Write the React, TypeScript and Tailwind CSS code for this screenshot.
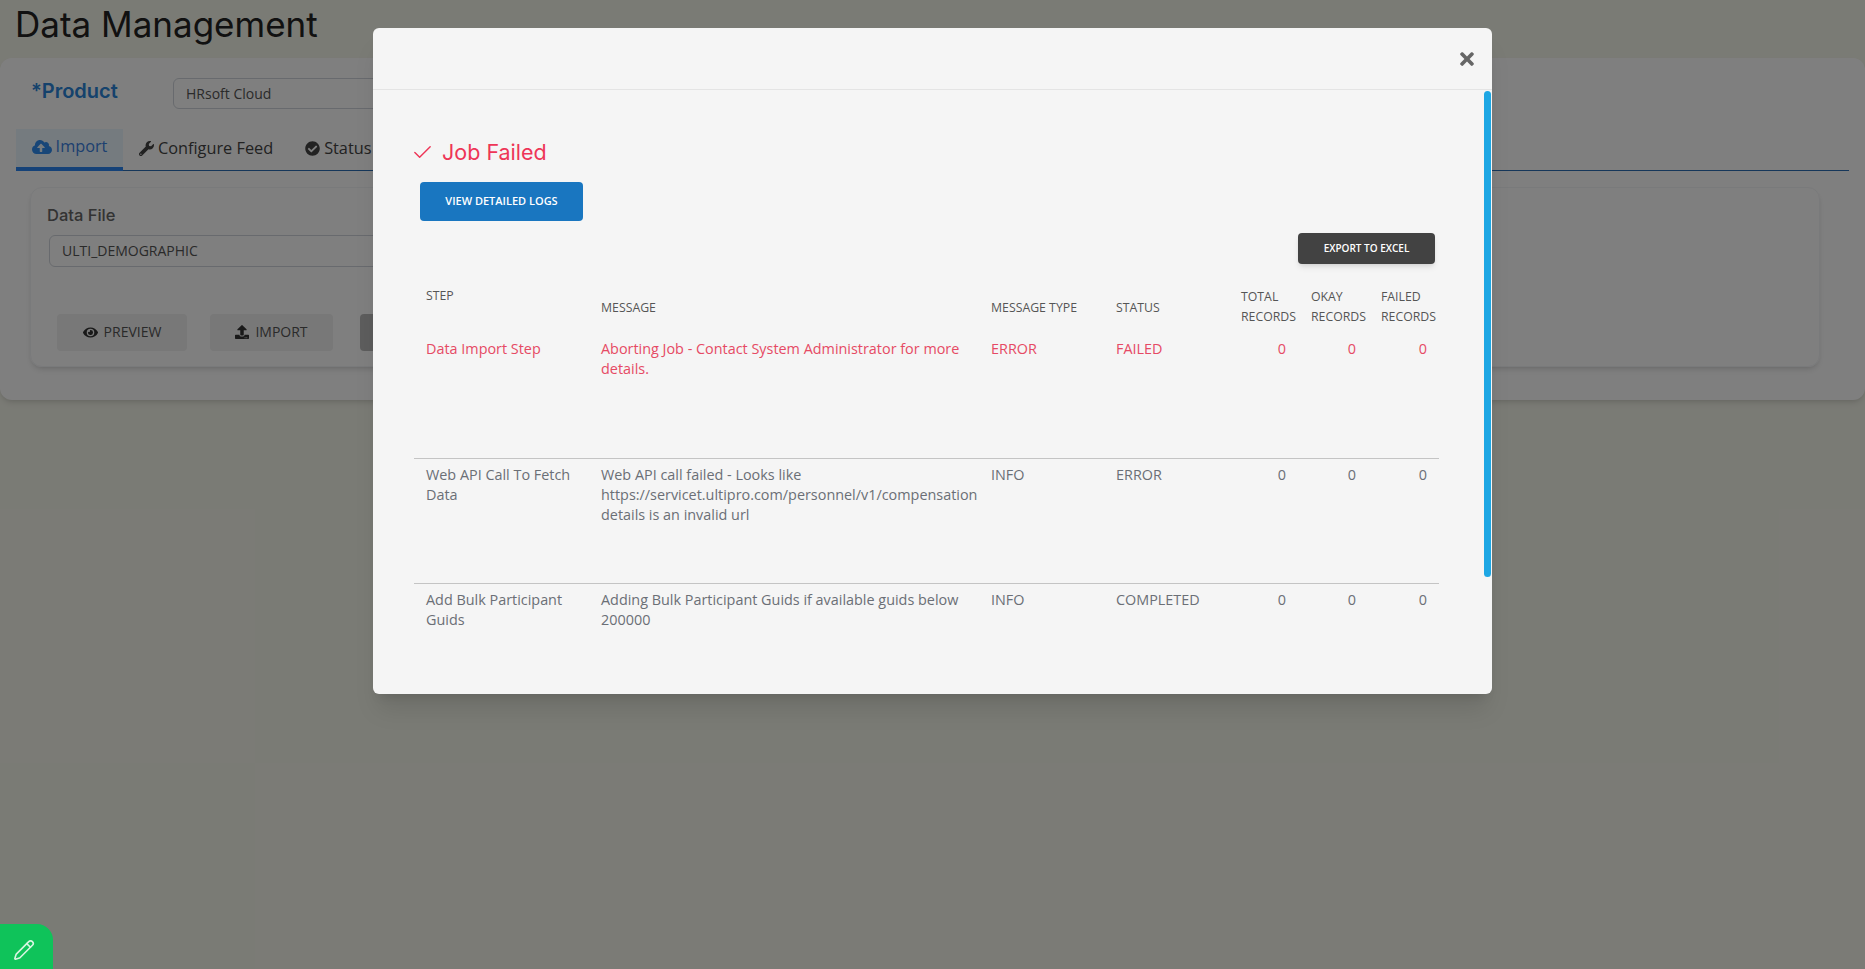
import React from "react";
import { FaCheckCircle, FaCloudUploadAlt, FaEye, FaTimes, FaUpload, FaWrench } from "react-icons/fa";
import { Check, Pencil } from "lucide-react";

const heading = "font-['Inter',sans-serif]";

interface JobRow {
  step: string;
  message: React.ReactNode;
  type: string;
  status: string;
  failed?: boolean;
}

const rows: JobRow[] = [
  {
    step: "Data Import Step",
    message: "Aborting Job - Contact System Administrator for more details.",
    type: "ERROR",
    status: "FAILED",
    failed: true,
  },
  {
    step: "Web API Call To Fetch Data",
    message: (
      <>
        Web API call failed - Looks like
        <br />
        https://servicet.ultipro.com/personnel/v1/compensation
        <br />
        details is an invalid url
      </>
    ),
    type: "INFO",
    status: "ERROR",
  },
  {
    step: "Add Bulk Participant Guids",
    message: "Adding Bulk Participant Guids if available guids below 200000",
    type: "INFO",
    status: "COMPLETED",
  },
];

const PageBehind = () => (
  <div className="h-[969px] bg-[#f5f6eb] font-['Open_Sans',sans-serif]">
    <h1 className={`${heading} pl-[15px] pt-[4px] h-[58px] text-[35px] leading-[40px] text-[#222]`}>Data Management</h1>
    <div className="h-[342px] bg-white rounded-xl shadow-md pt-[17px]">
      <div className="flex items-center h-[32px]">
        <span className={`${heading} ml-[31px] w-[142px] text-[20px] font-semibold text-[#2a84d8]`}>*Product</span>
        <div className="w-[500px] h-[31px] mt-[4px] border border-gray-300 rounded-md pl-3 text-sm leading-[30px] text-[#555]">
          HRsoft Cloud
        </div>
      </div>
      <div className="flex mx-4 mt-[22px] h-[42px] border-b border-[#2c6eb4] text-[16.3px] text-[#444]">
        <div className="flex items-center pb-[3px] gap-1 w-[107px] justify-center h-[42px] bg-[#ebf7ff] border-b-4 border-[#2a84f0] text-[#3a80e0]">
          <FaCloudUploadAlt className="text-[20px] text-[#2f8cf0]" />
          Import
        </div>
        <div className="flex items-center pb-[3px] gap-1 ml-4 h-[41px]">
          <FaWrench className="text-[15px]" />
          Configure Feed
        </div>
        <div className="flex items-center pb-[3px] gap-1 ml-8 h-[41px]">
          <FaCheckCircle className="text-[15px]" />
          Status
        </div>
      </div>
      <div className="ml-[30px] mr-[45px] mt-[16px] h-[180px] rounded-xl shadow-md border border-gray-100 pt-[15px] pl-[16px]">
        <div className={`${heading} text-[16.5px] font-medium text-[#666]`}>Data File</div>
        <div className="mt-[7px] ml-[2px] w-[500px] h-[32px] border border-gray-300 rounded-md pl-3 text-sm leading-[30px] text-[#555]">
          ULTI_DEMOGRAPHIC
        </div>
        <div className="flex mt-[47px] ml-[10px] gap-[23px] text-sm text-[#555]">
          <div className="flex items-center justify-center gap-[6px] w-[130px] h-[37px] bg-[#f0f0f0] rounded-sm">
            <FaEye className="text-[15px] text-[#333]" />
            PREVIEW
          </div>
          <div className="flex items-center justify-center gap-[6px] w-[123px] h-[37px] bg-[#f0f0f0] rounded-sm">
            <FaUpload className="text-[14px] text-[#333]" />
            IMPORT
          </div>
          <div className="w-[130px] h-[37px] ml-[4px] bg-[#bbb] rounded-sm" />
        </div>
      </div>
    </div>
  </div>
);

const JobModal = () => (
  <div className="w-[1119px] h-[666px] mt-[28px] ml-[373px] bg-[#f5f5f5] rounded-md shadow-xl overflow-hidden relative font-['Open_Sans',sans-serif]">
    <div className="flex items-center justify-end h-[62px] border-b border-[#e4e4e4] pr-[15px]">
      <FaTimes className="text-[20px] text-[#666]" />
    </div>
    <div className="pt-[47px] pl-[38px] pr-[52px]">
      <div className={`${heading} flex items-center h-[30px] text-[21.5px] text-[#ee3557]`}>
        <Check className="w-[23px] h-[23px] mr-[8px]" strokeWidth={1.5} />
        Job Failed
      </div>
      <button className="block ml-[9px] mt-[15px] w-[163px] h-[39px] rounded-sm bg-[#1976c0] text-white text-[11px] font-semibold">
        VIEW DETAILED LOGS
      </button>
      <div className="flex justify-end pr-[4px] mt-[12px] w-[1028px]">
        <button className="w-[137px] h-[31px] rounded-sm bg-[#424242] text-white text-[10px] font-semibold shadow-md">
          EXPORT TO EXCEL
        </button>
      </div>
      <table className="ml-[3px] w-[1025px] mt-[16px] table-fixed border-collapse text-[14.4px] leading-[20px] text-[#6b6f76]">
        <colgroup>
          <col className="w-[177px]" />
          <col className="w-[390px]" />
          <col className="w-[125px]" />
          <col className="w-[125px]" />
          <col className="w-[69px]" />
          <col className="w-[70px]" />
          <col className="w-[69px]" />
        </colgroup>
        <thead className="text-[12.3px] text-[#555] font-normal">
          <tr className="h-[53px]">
            <th className="align-top text-left font-normal pl-3 pt-[6px]">STEP</th>
            <th className="text-left font-normal pl-[10px] pt-[2px]">MESSAGE</th>
            <th className="text-left font-normal pl-[10px] pt-[2px]">MESSAGE TYPE</th>
            <th className="text-left font-normal pl-[10px] pt-[2px]">STATUS</th>
            <th className="text-left font-normal pl-[10px]">TOTAL RECORDS</th>
            <th className="text-left font-normal pl-[11px]">OKAY RECORDS</th>
            <th className="text-left font-normal pl-[11px]">FAILED RECORDS</th>
          </tr>
        </thead>
        <tbody>
          {rows.map((row, i) => (
            <tr key={row.step} className={`h-[125px] align-top ${i > 0 ? "border-t border-[#c4c4c4]" : ""} ${row.failed ? "text-[#e64a64]" : ""}`}>
              <td className="pl-3 pr-2 pt-[6px]">{row.step}</td>
              <td className="pl-[10px] pt-[6px] whitespace-normal">{row.message}</td>
              <td className="pl-[10px] pt-[6px]">{row.type}</td>
              <td className="pl-[10px] pt-[6px]">{row.status}</td>
              <td className="pr-[14px] pt-[6px] text-right">0</td>
              <td className="pr-[14px] pt-[6px] text-right">0</td>
              <td className="pr-[12px] pt-[6px] text-right">0</td>
            </tr>
          ))}
        </tbody>
      </table>
    </div>
    {/* scrollbar thumb */}
    <div className="absolute right-[1px] top-[63px] w-[7px] h-[486px] rounded-full bg-[#1ea7e4]" />
  </div>
);

export default function App() {
  return (
    <div className="relative h-[969px] overflow-hidden">
      <PageBehind />
      <div className="absolute inset-0 bg-black/50" />
      <div className="absolute inset-0">
        <JobModal />
      </div>
      <div className="absolute left-0 bottom-0 flex items-center justify-center w-[53px] h-[45px] pr-[5px] pt-[7px] bg-[#0fc35a] rounded-tr-2xl">
        <Pencil className="w-[22px] h-[22px] text-[#d8f5e2]" strokeWidth={1.75} />
      </div>
    </div>
  );
}
